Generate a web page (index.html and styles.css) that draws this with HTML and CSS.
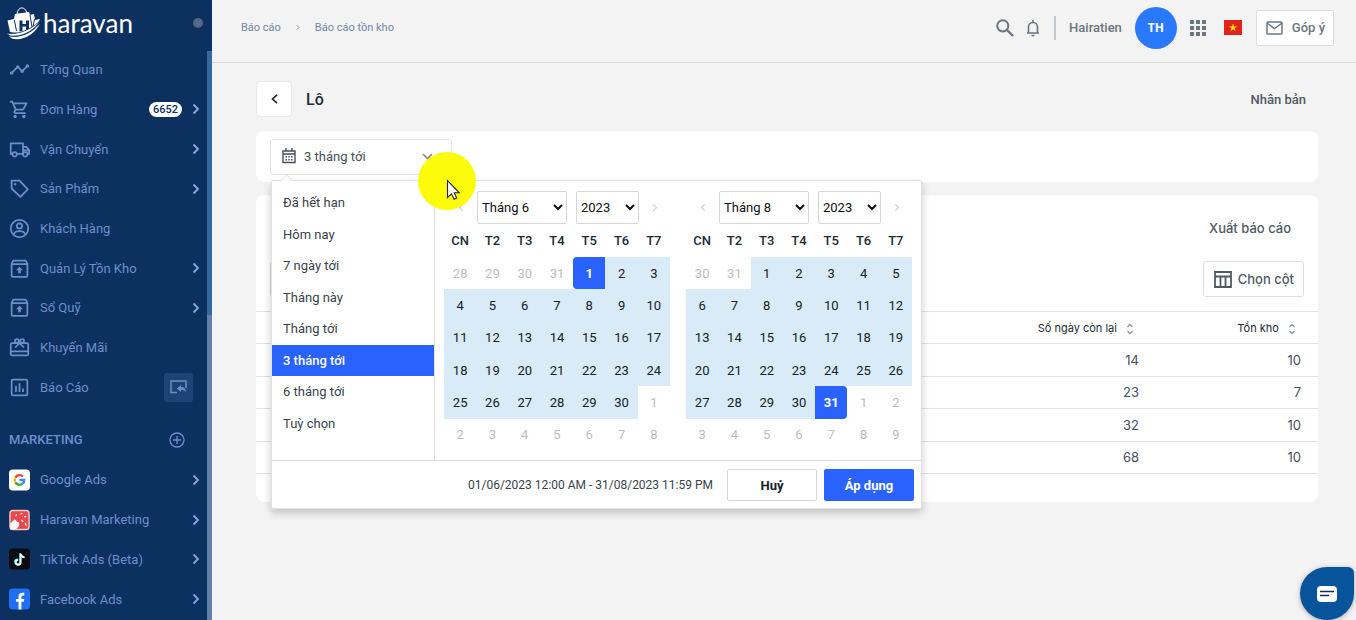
FILE: index.html
```html
<!DOCTYPE html>
<html lang="vi">
<head>
    <meta charset="UTF-8">
    <meta name="viewport" content="width=device-width, initial-scale=1">
    <title>Lô - Báo cáo tồn kho</title>
    <link rel="stylesheet" href="styles.css">
</head>
<body>

<!-- Shared icons -->
<svg class="sprite" width="0" height="0" aria-hidden="true">
    <symbol id="chevron" viewBox="0 0 8 12"><path d="M1.500 1.500 6 6 1.500 10.500" fill="none" stroke="currentColor" stroke-width="1.800"/></symbol>
    <symbol id="box-up" viewBox="0 0 24 24"><path d="M3 6.500V20a1.500 1.500 0 0 0 1.500 1.500h15A1.500 1.500 0 0 0 21 20V6.500L19 3H5zM3 7h18" fill="none" stroke="currentColor" stroke-width="2"/><path d="M12 10l4 4h-2.500v3.500h-3V14H8z" fill="currentColor"/></symbol>
    <symbol id="sort" viewBox="0 0 8 12"><path d="M1.500 4 4 1.500 6.500 4M1.500 8 4 10.500 6.500 8" fill="none" stroke="currentColor" stroke-width="1.300"/></symbol>
</svg>

<div class="app">
    <aside class="sidebar">
        <div class="brand">
            <a href="#" class="logo">
                <svg width="36" height="34" viewBox="0 0 36 34" aria-hidden="true">
                    <path d="M11 8c1-8 8-8 10-1" fill="none" stroke="#fff" stroke-width="1"/>
                    <path d="M1.500 14.500 8 13l1-5 14-2 1 3 4-1 1 6 5-1-4 8C23 26 12 28 4 26z" fill="#fff"/>
                    <path d="M8.300 14 10.500 25M24 9l2 12M28.500 13l-1.500 8" stroke="#0c3161" stroke-width="1"/>
                    <path d="M13.500 14.500h3V18h3.500v-3.500h3V23l-3 1v-3.500h-3.500V25l-3 .5z" fill="#0c3161"/>
                    <path d="M0 27c9 2 22-1 34-12-7 11-18 16-30 15z" fill="#fff" stroke="#0c3161" stroke-width=".8"/>
                    <path d="M3 30.500c11 2 23-3 31-13-5 11-18 18-28 15z" fill="#fff"/>
                </svg>
                <span>haravan</span>
            </a>
            <span class="status-dot"></span>
        </div>

        <nav class="menu menu-main">
            <a href="#">
                <svg class="icon" viewBox="0 0 24 24"><path fill="currentColor" d="M23 8c0 1.100-.9 2-2 2-.18 0-.35-.02-.51-.07l-3.560 3.550c.05.16.07.34.07.52 0 1.100-.9 2-2 2s-2-.9-2-2c0-.18.02-.36.07-.52l-2.550-2.550c-.16.05-.34.07-.52.07s-.36-.02-.52-.07l-4.550 4.560c.05.16.07.33.07.51 0 1.100-.9 2-2 2s-2-.9-2-2 .9-2 2-2c.18 0 .35.02.51.07l4.560-4.550C8.020 9.360 8 9.180 8 9c0-1.100.9-2 2-2s2 .9 2 2c0 .18-.02.36-.07.52l2.550 2.550c.16-.05.34-.07.52-.07s.36.02.52.07l3.550-3.560C19.020 8.350 19 8.180 19 8c0-1.100.9-2 2-2s2 .9 2 2z"/></svg>
                <span>Tổng Quan</span>
            </a>
            <a href="#">
                <svg class="icon" viewBox="0 0 24 24"><path fill="currentColor" d="M15.550 13c.75 0 1.410-.41 1.750-1.030l3.580-6.490A.996.996 0 0 0 20.010 4H5.210l-.94-2H1v2h2l3.600 7.590-1.350 2.440C4.520 15.370 5.480 17 7 17h12v-2H7l1.100-2h7.450zM6.160 6h12.150l-2.760 5H8.530L6.160 6zM7 18a2 2 0 1 0 0 4 2 2 0 0 0 0-4zm10 0a2 2 0 1 0 0 4 2 2 0 0 0 0-4z"/></svg>
                <span>Đơn Hàng</span>
                <span class="badge">6652</span>
                <svg class="chevron"><use href="#chevron"/></svg>
            </a>
            <a href="#">
                <svg class="icon" viewBox="0 0 24 24" fill="none" stroke="currentColor" stroke-width="2"><path d="M4 17H2V5h14v12H9M16 9h4l3 4v4h-2M16 17h-1M16 13h7"/><circle cx="6.500" cy="17.500" r="2.500"/><circle cx="18.500" cy="17.500" r="2.500"/></svg>
                <span>Vận Chuyển</span>
                <svg class="chevron"><use href="#chevron"/></svg>
            </a>
            <a href="#">
                <svg class="icon" viewBox="0 0 24 24" fill="none" stroke="currentColor" stroke-width="2"><path d="M3 3h9l9.500 10-8.500 8.500L3 12z" stroke-linejoin="round"/><circle cx="7" cy="7" r="1" fill="currentColor" stroke-width="1"/></svg>
                <span>Sản Phẩm</span>
                <svg class="chevron"><use href="#chevron"/></svg>
            </a>
            <a href="#">
                <svg class="icon" viewBox="0 0 24 24" fill="none" stroke="currentColor" stroke-width="2"><circle cx="12" cy="12" r="10"/><circle cx="12" cy="9" r="3"/><path d="M5.500 18.500c2-4.500 11-4.500 13 0"/></svg>
                <span>Khách Hàng</span>
            </a>
            <a href="#">
                <svg class="icon"><use href="#box-up"/></svg>
                <span>Quản Lý Tồn Kho</span>
                <svg class="chevron"><use href="#chevron"/></svg>
            </a>
            <a href="#">
                <svg class="icon"><use href="#box-up"/></svg>
                <span>Sổ Quỹ</span>
                <svg class="chevron"><use href="#chevron"/></svg>
            </a>
            <a href="#">
                <svg class="icon" viewBox="0 0 24 24" fill="none" stroke="currentColor" stroke-width="2"><rect x="2" y="7" width="20" height="14" rx="1.500"/><path d="M2 16.500h20M12 7l-5 5M12 7l5 5"/><circle cx="9" cy="4.500" r="2.200"/><circle cx="15" cy="4.500" r="2.200"/></svg>
                <span>Khuyến Mãi</span>
            </a>
            <a href="#">
                <svg class="icon" viewBox="0 0 24 24" fill="none" stroke="currentColor" stroke-width="2"><rect x="3" y="3" width="18" height="18" rx="1.500"/><path d="M8 10v7M12 7v10M16 13v4"/></svg>
                <span>Báo Cáo</span>
                <span class="pin">
                    <svg width="17" height="14" viewBox="0 0 17 14"><path d="M7 12.500H1V1h15v7" fill="none" stroke="currentColor" stroke-width="1.500"/><path d="M7 8.500 11 5v2c3 0 5 2 5 5-1-1.500-3-2-5-2v2z" fill="currentColor"/></svg>
                </span>
            </a>
        </nav>

        <div class="menu-title">
            <h2>MARKETING</h2>
            <button type="button" aria-label="Thêm">
                <svg width="16" height="16" viewBox="0 0 16 16" fill="none" stroke="currentColor" stroke-width="1.300"><circle cx="8" cy="8" r="7"/><path d="M8 4v8M4 8h8"/></svg>
            </button>
        </div>

        <nav class="menu menu-apps">
            <a href="#">
                <svg class="app-icon" viewBox="0 0 22 22"><rect width="22" height="22" rx="4" fill="#fff"/><g fill="none" stroke-width="2.400"><path d="M14.500 7.200A5 5 0 0 0 6.700 8.500" stroke="#ea4335"/><path d="M6.700 8.500a5 5 0 0 0 0 5" stroke="#fbbc05"/><path d="M6.700 13.500a5 5 0 0 0 7.500 1.400" stroke="#34a853"/><path d="M14.200 14.900A5 5 0 0 0 16 11h-5" stroke="#4285f4"/></g></svg>
                <span>Google Ads</span>
                <svg class="chevron"><use href="#chevron"/></svg>
            </a>
            <a href="#">
                <svg class="app-icon" viewBox="0 0 22 22"><rect x="1" y="1" width="20" height="20" rx="3" fill="#e5484d" stroke="#f3c9c4" stroke-width="1.500"/><path d="M2 20v-5l4-4 2 2 2 1v3l-3 3zM7 7l1-2M12 5l2-1M16 8l2-1M13 11l2 2M17 14l1 3" fill="#fff" stroke="#fff" stroke-width="1.200"/></svg>
                <span>Haravan Marketing</span>
                <svg class="chevron"><use href="#chevron"/></svg>
            </a>
            <a href="#">
                <svg class="app-icon" viewBox="0 0 22 22"><rect width="22" height="22" rx="4" fill="#0a0a12"/><path d="M11.500 5v9a2.600 2.600 0 1 1-2.600-2.600M11.500 5c.3 2.200 1.800 3.600 4 3.800" fill="none" stroke="#25f4ee" stroke-width="1.800"/><path d="M12.300 5.500v9a2.600 2.600 0 1 1-2.600-2.600M12.300 5.500c.3 2.200 1.800 3.600 4 3.800" fill="none" stroke="#fff" stroke-width="1.800"/></svg>
                <span>TikTok Ads (Beta)</span>
                <svg class="chevron"><use href="#chevron"/></svg>
            </a>
            <a href="#">
                <svg class="app-icon" viewBox="0 0 22 22"><rect width="22" height="22" rx="4" fill="#1f6ff0"/><path d="M10 22v-8H7.300v-3H10V8.800C10 6 11.500 4.500 14 4.500h2v2.800h-1.500c-1.200 0-1.500.6-1.500 1.600V11h3l-.5 3H13v8z" fill="#fff"/></svg>
                <span>Facebook Ads</span>
                <svg class="chevron"><use href="#chevron"/></svg>
            </a>
        </nav>
        <div class="scrollbar"><div class="scroll-thumb"></div></div>
    </aside>

    <div class="page">
        <header class="topbar">
            <nav class="breadcrumb">
                <a href="#">Báo cáo</a>
                <svg width="4" height="7" viewBox="0 0 8 12"><use href="#chevron"/></svg>
                <a href="#">Báo cáo tồn kho</a>
            </nav>
            <div class="topbar-tools">
                <button type="button" class="tool search" aria-label="Tìm kiếm">
                    <svg width="18" height="18" viewBox="0 0 18 18" fill="none" stroke="currentColor" stroke-width="2"><circle cx="6.800" cy="6.800" r="5.600"/><path d="M11 11l6 6" stroke-width="2.400"/></svg>
                </button>
                <button type="button" class="tool bell" aria-label="Thông báo">
                    <svg width="14" height="18" viewBox="0 0 14 18"><path d="M1 14h12M2.500 14V8a4.500 4.500 0 0 1 9 0v6M7 1v2" fill="none" stroke="currentColor" stroke-width="1.600"/><path d="M5.200 15.700h3.600a1.800 1.800 0 0 1-3.600 0z" fill="currentColor"/></svg>
                </button>
                <span class="divider"></span>
                <span class="user-name">Hairatien</span>
                <span class="avatar">TH</span>
                <button type="button" class="tool apps" aria-label="Ứng dụng">
                    <svg width="16" height="16" viewBox="0 0 16 16" fill="currentColor"><path d="M0 0h4v4H0zM6 0h4v4H6zM12 0h4v4h-4zM0 6h4v4H0zM6 6h4v4H6zM12 6h4v4h-4zM0 12h4v4H0zM6 12h4v4H6zM12 12h4v4h-4z"/></svg>
                </button>
                <svg class="flag" width="18" height="15" viewBox="0 0 18 15"><path d="M0 0h18v15H0z" fill="#e2231a"/><path d="M9 3.500l1 2.900h3l-2.400 1.800.9 2.900L9 9.300l-2.500 1.800.9-2.900L5 6.400h3z" fill="#ffeb00"/></svg>
                <button type="button" class="feedback">
                    <svg width="17" height="14" viewBox="0 0 17 14" fill="none" stroke="currentColor" stroke-width="1.500"><rect x="1" y="1" width="15" height="12" rx="1"/><path d="M1 2l7.500 5.500L16 2"/></svg>
                    <span>Góp ý</span>
                </button>
            </div>
        </header>

        <main class="content">
            <div class="title-row">
                <button type="button" class="back" aria-label="Quay lại">
                    <svg width="7" height="10" viewBox="0 0 7 10"><path d="M6 .8 1.500 5 6 9.200" fill="none" stroke="currentColor" stroke-width="1.700"/></svg>
                </button>
                <h1>Lô</h1>
                <button type="button" class="text-btn duplicate">Nhân bản</button>
            </div>

            <section class="card filter-card">
                <div class="date-filter">
                    <button type="button" class="date-toggle">
                        <svg width="14" height="16" viewBox="0 0 14 16"><path d="M1 3h12v11.500H1zM1 6h12M4 0v3M10 0v3" fill="none" stroke="currentColor" stroke-width="1.400"/><path d="M3.500 8h1.500v1.500H3.500zM6.300 8h1.500v1.500H6.300zM9.100 8h1.500v1.500H9.100zM3.500 11h1.500v1.500H3.500zM6.300 11h1.500v1.500H6.300zM9.100 11h1.500v1.500H9.100z" fill="currentColor"/></svg>
                        <span>3 tháng tới</span>
                        <svg class="caret" width="11" height="7" viewBox="0 0 11 7"><path d="M1 1l4.500 4.500L10 1" fill="none" stroke="currentColor" stroke-width="1.600"/></svg>
                    </button>

                    <div class="picker">
                        <div class="picker-body">
                            <ul class="ranges">
                                <li><button type="button">Đã hết hạn</button></li>
                                <li><button type="button">Hôm nay</button></li>
                                <li><button type="button">7 ngày tới</button></li>
                                <li><button type="button">Tháng này</button></li>
                                <li><button type="button">Tháng tới</button></li>
                                <li><button type="button" class="active">3 tháng tới</button></li>
                                <li><button type="button">6 tháng tới</button></li>
                                <li><button type="button">Tuỳ chọn</button></li>
                            </ul>
                            <div class="calendars">
                                <div class="calendar">
                                    <div class="calendar-head">
                                        <button type="button" class="prev" aria-label="Tháng trước"><svg width="6" height="9"><use href="#chevron"/></svg></button>
                                        <select class="month" aria-label="Tháng bắt đầu"><option>Tháng 6</option></select>
                                        <select class="year" aria-label="Năm bắt đầu"><option>2023</option></select>
                                        <button type="button" class="next" aria-label="Tháng sau"><svg width="6" height="9"><use href="#chevron"/></svg></button>
                                    </div>
                                    <table class="days">
                                        <thead>
                                            <tr><th>CN</th><th>T2</th><th>T3</th><th>T4</th><th>T5</th><th>T6</th><th>T7</th></tr>
                                        </thead>
                                        <tbody>
                                            <tr><td class="off">28</td><td class="off">29</td><td class="off">30</td><td class="off">31</td><td class="start">1</td><td class="in">2</td><td class="in">3</td></tr>
                                            <tr><td class="in">4</td><td class="in">5</td><td class="in">6</td><td class="in">7</td><td class="in">8</td><td class="in">9</td><td class="in">10</td></tr>
                                            <tr><td class="in">11</td><td class="in">12</td><td class="in">13</td><td class="in">14</td><td class="in">15</td><td class="in">16</td><td class="in">17</td></tr>
                                            <tr><td class="in">18</td><td class="in">19</td><td class="in">20</td><td class="in">21</td><td class="in">22</td><td class="in">23</td><td class="in">24</td></tr>
                                            <tr><td class="in">25</td><td class="in">26</td><td class="in">27</td><td class="in">28</td><td class="in">29</td><td class="in">30</td><td class="off">1</td></tr>
                                            <tr><td class="off">2</td><td class="off">3</td><td class="off">4</td><td class="off">5</td><td class="off">6</td><td class="off">7</td><td class="off">8</td></tr>
                                        </tbody>
                                    </table>
                                </div>
                                <div class="calendar">
                                    <div class="calendar-head">
                                        <button type="button" class="prev" aria-label="Tháng trước"><svg width="6" height="9"><use href="#chevron"/></svg></button>
                                        <select class="month" aria-label="Tháng kết thúc"><option>Tháng 8</option></select>
                                        <select class="year" aria-label="Năm kết thúc"><option>2023</option></select>
                                        <button type="button" class="next" aria-label="Tháng sau"><svg width="6" height="9"><use href="#chevron"/></svg></button>
                                    </div>
                                    <table class="days">
                                        <thead>
                                            <tr><th>CN</th><th>T2</th><th>T3</th><th>T4</th><th>T5</th><th>T6</th><th>T7</th></tr>
                                        </thead>
                                        <tbody>
                                            <tr><td class="off">30</td><td class="off">31</td><td class="in">1</td><td class="in">2</td><td class="in">3</td><td class="in">4</td><td class="in">5</td></tr>
                                            <tr><td class="in">6</td><td class="in">7</td><td class="in">8</td><td class="in">9</td><td class="in">10</td><td class="in">11</td><td class="in">12</td></tr>
                                            <tr><td class="in">13</td><td class="in">14</td><td class="in">15</td><td class="in">16</td><td class="in">17</td><td class="in">18</td><td class="in">19</td></tr>
                                            <tr><td class="in">20</td><td class="in">21</td><td class="in">22</td><td class="in">23</td><td class="in">24</td><td class="in">25</td><td class="in">26</td></tr>
                                            <tr><td class="in">27</td><td class="in">28</td><td class="in">29</td><td class="in">30</td><td class="end">31</td><td class="off">1</td><td class="off">2</td></tr>
                                            <tr><td class="off">3</td><td class="off">4</td><td class="off">5</td><td class="off">6</td><td class="off">7</td><td class="off">8</td><td class="off">9</td></tr>
                                        </tbody>
                                    </table>
                                </div>
                            </div>
                        </div>
                        <div class="picker-footer">
                            <span>01/06/2023 12:00 AM - 31/08/2023 11:59 PM</span>
                            <button type="button" class="cancel">Huỷ</button>
                            <button type="button" class="apply">Áp dụng</button>
                        </div>
                    </div>
                </div>
            </section>

            <section class="card report-card">
                <div class="export-row">
                    <button type="button" class="text-btn">Xuất báo cáo</button>
                </div>
                <div class="tools-row">
                    <input type="text" class="table-search" aria-label="Tìm kiếm trong báo cáo">
                    <button type="button" class="columns-btn">
                        <svg width="18" height="17" viewBox="0 0 18 17" fill="none" stroke="currentColor" stroke-width="1.800"><path d="M1 1h16v15H1zM1 5.500h16M6.500 5.500V16M11.500 5.500V16"/></svg>
                        <span>Chọn cột</span>
                    </button>
                </div>
                <table class="report">
                    <thead>
                        <tr>
                            <th>Số ngày còn lại <svg width="8" height="12"><use href="#sort"/></svg></th>
                            <th>Tồn kho <svg width="8" height="12"><use href="#sort"/></svg></th>
                        </tr>
                    </thead>
                    <tbody>
                        <tr><td>14</td><td>10</td></tr>
                        <tr><td>23</td><td>7</td></tr>
                        <tr><td>32</td><td>10</td></tr>
                        <tr><td>68</td><td>10</td></tr>
                    </tbody>
                </table>
            </section>
        </main>
    </div>
</div>

<button type="button" class="chat" aria-label="Chat">
    <svg width="20" height="16" viewBox="0 0 20 16"><rect width="20" height="16" rx="4" fill="#fff"/><path d="M3 5.500h14M3 9.500h9" stroke="#12304f" stroke-width="1.500"/></svg>
</button>

<!-- Pointer with click highlight -->
<svg class="pointer" width="58" height="58" viewBox="0 0 58 58" aria-hidden="true">
    <circle cx="29" cy="29" r="29" fill="#fbfb0a"/>
    <path d="M29.500 28.500v17l4-3.700 2.600 5.400 2.600-1.200-2.500-5.200h5.100z" fill="#fff" stroke="#222" stroke-width="1.100"/>
</svg>

</body>
</html>
```

FILE: styles.css
```css
* {
    box-sizing: border-box;
}

body {
    margin: 0;
    font-family: Roboto, "Liberation Sans", sans-serif;
    font-size: 13px;
    color: #212b36;
    background: #f3f3f3;
}

button,
select,
input {
    font: inherit;
    color: inherit;
}

button {
    padding: 0;
    border: none;
    background: none;
    cursor: pointer;
}

a {
    color: inherit;
    text-decoration: none;
}

h1,
h2,
ul {
    margin: 0;
    padding: 0;
}

.sprite {
    position: absolute;
}

.app {
    display: flex;
    height: 100vh;
    overflow: hidden;
}

/* Sidebar */
.sidebar {
    position: relative;
    flex: none;
    width: 212px;
    background: #0c3161;
    color: #6d8fc8;
    overflow: hidden;
}

.brand {
    display: flex;
    align-items: center;
    justify-content: space-between;
    height: 50px;
    padding: 0 9px 4px 6px;
}

.logo {
    display: flex;
    align-items: center;
    gap: 1px;
    color: #fff;
    font-family: Lato, sans-serif;
    font-size: 26px;
    line-height: 30px;
}

.status-dot {
    width: 10px;
    height: 10px;
    border: 2px solid #5b6470;
    border-radius: 50%;
    background: #46709f;
}

.menu {
    display: grid;
    grid-auto-rows: 1fr;
}

.menu-main {
    height: 357px;
}

.menu-apps {
    height: 159px;
}

.menu a {
    display: flex;
    align-items: center;
    padding: 0 12px 0 9px;
}

.icon {
    flex: none;
    width: 21px;
    height: 21px;
    margin-right: 10px;
}

.app-icon {
    flex: none;
    width: 21px;
    height: 22px;
    margin-right: 10px;
}

.chevron {
    width: 8px;
    height: 12px;
    margin-left: auto;
    color: #86a8dc;
}

.badge {
    margin-left: auto;
    padding: 0 4px;
    border-radius: 8px;
    background: #fff;
    color: #0c3161;
    font-size: 11px;
    font-weight: 500;
    line-height: 15px;
}

.badge + .chevron {
    margin-left: 10px;
}

.pin {
    display: flex;
    align-items: center;
    justify-content: center;
    width: 29px;
    height: 29px;
    margin: 0 7px 0 auto;
    border-radius: 3px;
    background: #1f4374;
}

.menu-title {
    display: flex;
    align-items: center;
    justify-content: space-between;
    height: 53px;
    padding: 12px 27px 0 9px;
}

.menu-title h2 {
    font-size: 13px;
    font-weight: 500;
}

.menu-title button {
    display: flex;
}

.scrollbar {
    position: absolute;
    top: 51px;
    right: 0;
    bottom: 0;
    width: 5px;
    background: #637fab;
}

.scroll-thumb {
    height: 264px;
    background: #34689f;
}

/* Top bar */
.page {
    flex: 1;
    min-width: 0;
}

.topbar {
    display: flex;
    align-items: center;
    justify-content: space-between;
    height: 63px;
    padding: 0 22px 7px 29px;
    border-bottom: 1px solid #d9dcdd;
    color: #6b7681;
}

.breadcrumb {
    display: flex;
    align-items: center;
    gap: 15px;
    font-size: 11px;
    color: #7088a6;
}

.topbar-tools {
    display: flex;
    align-items: center;
    font-weight: 500;
}

.tool {
    display: flex;
}

.search {
    margin-right: 12px;
}

.divider {
    width: 2px;
    height: 24px;
    margin: 0 13px 0 14px;
    background: #c5c8cb;
}

.avatar {
    display: flex;
    align-items: center;
    justify-content: center;
    width: 42px;
    height: 42px;
    margin: 0 13px;
    border-radius: 50%;
    background: #2979ff;
    color: #fff;
    font-family: "Open Sans", sans-serif;
    font-size: 12px;
    font-weight: 700;
}

.flag {
    margin: 0 14px 0 18px;
}

.feedback {
    display: flex;
    align-items: center;
    gap: 9px;
    height: 36px;
    padding: 0 8px 0 9px;
    border: 1px solid #dcdfe2;
    border-radius: 2px;
    background: #fff;
    font-weight: 500;
}

/* Content */
.content {
    padding: 18px 38px 0 44px;
    font-family: Inter, Roboto, sans-serif;
}

.title-row {
    display: flex;
    align-items: center;
    gap: 14px;
    margin-bottom: 14px;
}

.back {
    display: flex;
    align-items: center;
    justify-content: center;
    width: 36px;
    height: 36px;
    border: 1px solid #e6e8ea;
    border-radius: 4px;
    background: #fff;
}

h1 {
    font-family: Roboto, sans-serif;
    font-size: 16px;
    font-weight: 500;
}

.text-btn {
    color: #4f5a65;
    font-weight: 500;
}

.duplicate {
    margin: 0 12px 0 auto;
    font-family: Roboto, sans-serif;
}

.card {
    border-radius: 8px;
    background: #fff;
}

.filter-card {
    margin-bottom: 13px;
    padding: 8px 14px 7px;
}

.date-filter {
    position: relative;
    width: 182px;
}

.date-toggle {
    display: flex;
    align-items: center;
    gap: 8px;
    width: 100%;
    height: 36px;
    padding: 0 18px 2px 11px;
    border: 1px solid #e1e4e7;
    border-radius: 3px;
    color: #454f5b;
    font-family: Roboto, sans-serif;
}

.caret {
    margin-left: auto;
    color: #7d8790;
}

/* Date range picker */
.picker {
    position: absolute;
    top: 41px;
    left: 1px;
    z-index: 5;
    width: 651px;
    border: 1px solid #dfe1e3;
    border-radius: 2px;
    background: #fff;
    box-shadow: 0 4px 8px rgba(0, 0, 0, 0.2);
    font-family: Roboto, "Liberation Sans", sans-serif;
}

.picker::before {
    content: "";
    position: absolute;
    top: -5px;
    left: 10px;
    width: 8px;
    height: 8px;
    border: 1px solid #dfe1e3;
    border-right: none;
    border-bottom: none;
    background: #fff;
    transform: rotate(45deg);
}

.picker-body {
    display: flex;
    height: 280px;
    border-bottom: 1px solid #dcdfe1;
}

.ranges {
    display: grid;
    grid-auto-rows: 1fr;
    width: 163px;
    padding: 6px 0 21px;
    border-right: 1px solid #dcdfe1;
    list-style: none;
}

.ranges button {
    width: 100%;
    height: 100%;
    padding-left: 11px;
    color: #39434d;
    text-align: left;
}

.ranges .active {
    background: #2962ff;
    color: #fff;
    font-weight: 500;
}

.calendars {
    display: flex;
    flex: 1;
    gap: 16px;
    padding: 10px 9px;
}

.calendar {
    flex: 1;
}

.calendar-head {
    display: flex;
    align-items: center;
}

.calendar-head button {
    flex: 1;
    color: #cfd3d7;
}

.calendar-head .prev {
    flex: none;
    width: 33px;
}

.prev svg {
    transform: scaleX(-1);
}

.calendar-head select {
    height: 33px;
    border: 1px solid #d5d8db;
    border-radius: 2px;
    background: #fff;
    color: #111;
}

.month {
    width: 90px;
    margin-right: 9px;
}

.year {
    width: 63px;
}

.days {
    width: 100%;
    height: 227px;
    border-collapse: collapse;
    table-layout: fixed;
    text-align: center;
}

.days th {
    height: 33px;
    padding: 0;
    font-weight: 500;
}

.days td {
    height: 32px;
    padding: 0;
    color: #16202b;
}

.days .in {
    background: #d8ebf7;
}

.days .off {
    color: #b9bdc1;
}

.days .start,
.days .end {
    background: #2962ff;
    color: #fff;
    font-weight: 700;
}

.days .start {
    border-radius: 4px 0 0 4px;
}

.days .end {
    border-radius: 0 4px 4px 0;
}

.picker-footer {
    display: flex;
    align-items: center;
    justify-content: flex-end;
    gap: 7px;
    padding: 8px 7px 7px;
    color: #39434d;
}

.picker-footer span {
    margin-right: 7px;
    font-size: 12px;
}

.picker-footer button {
    width: 90px;
    height: 32px;
    border-radius: 2px;
    font-weight: 700;
}

.picker-footer .cancel {
    border: 1px solid #d5d8db;
    color: #16202b;
}

.picker-footer .apply {
    background: #2962ff;
    color: #fff;
}

/* Report table */
.report-card {
    padding: 16px 0 28px;
}

.export-row {
    display: flex;
    justify-content: flex-end;
    height: 34px;
    margin-bottom: 16px;
    padding-right: 27px;
}

.tools-row {
    display: flex;
    justify-content: space-between;
    margin-bottom: 14px;
    padding: 0 14px;
}

.table-search {
    width: 360px;
    padding: 0 12px;
    border: 1px solid #d5d8db;
    border-radius: 3px;
}

.columns-btn {
    display: flex;
    align-items: center;
    gap: 6px;
    height: 36px;
    padding: 0 9px 0 10px;
    border: 1px solid #dcdfe2;
    border-radius: 3px;
    color: #4f5a65;
    font-weight: 500;
}

.report {
    width: 100%;
    height: 163px;
    border-collapse: collapse;
    text-align: right;
}

.report tr {
    border-top: 1px solid #e1e3e5;
    border-bottom: 1px solid #e1e3e5;
}

.report th {
    height: 32px;
    padding: 0 22px 0 0;
    font-size: 11px;
    font-weight: 400;
}

.report th svg {
    margin-left: 6px;
    color: #8c959d;
    vertical-align: middle;
}

.report td {
    height: 32px;
    padding: 0 17px 0 0;
    color: #454f5b;
}

.report th:last-child,
.report td:last-child {
    width: 162px;
}

/* Chat bubble */
.chat {
    position: fixed;
    right: 2px;
    bottom: 0;
    display: flex;
    align-items: center;
    justify-content: center;
    width: 54px;
    height: 53px;
    border-radius: 50% 6px 50% 50%;
    background: #07549b;
    box-shadow: 0 1px 5px rgba(0, 0, 0, 0.3);
}

.pointer {
    position: absolute;
    top: 152px;
    left: 418px;
    z-index: 10;
    pointer-events: none;
}
```
